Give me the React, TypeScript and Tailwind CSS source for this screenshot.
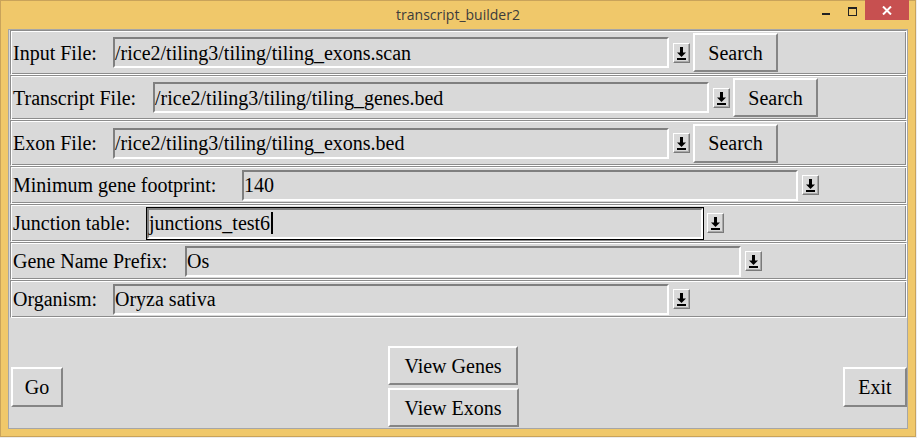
import React from "react";

function ArrowBtn() {
  return (
    <div className="ml-[3px] w-[17px] h-[20px] shrink-0 bg-[#d9d9d9] border-t border-l border-t-white border-l-white border-b border-r border-b-[#7a7a7a] border-r-[#7a7a7a] shadow-[inset_-1px_-1px_0_#a8a8a8]">
      <svg width="15" height="18" viewBox="0 0 15 18" className="block">
        <rect x="6" y="3" width="3" height="6" fill="#000" />
        <polygon points="3,8.5 12,8.5 7.5,13" fill="#000" />
        <rect x="3" y="14" width="9" height="2" fill="#000" />
      </svg>
    </div>
  );
}

function RaisedButton({ label, w, h }: { label: string; w: string; h?: string }) {
  return (
    <div
      className={
        "shrink-0 flex items-center justify-center bg-[#d9d9d9] text-[20px] text-black border-t-2 border-l-2 border-t-white border-l-white border-b-2 border-r-2 border-b-[#858585] border-r-[#858585] " +
        w +
        " " +
        (h ?? "h-[39px]")
      }
    >
      <span className="leading-none">{label}</span>
    </div>
  );
}

type Row = {
  label: string;
  lw: string;
  value: string;
  search?: boolean;
  focus?: boolean;
  h: string;
};

const rows: Row[] = [
  { label: "Input File:", lw: "w-[100px]", value: "/rice2/tiling3/tiling/tiling_exons.scan", search: true, h: "h-[45px]" },
  { label: "Transcript File:", lw: "w-[140px]", value: "/rice2/tiling3/tiling/tiling_genes.bed", search: true, h: "h-[45px]" },
  { label: "Exon File:", lw: "w-[100px]", value: "/rice2/tiling3/tiling/tiling_exons.bed", search: true, h: "h-[46px]" },
  { label: "Minimum gene footprint:", lw: "w-[229px]", value: "140", h: "h-[38px]" },
  { label: "Junction table:", lw: "w-[134px]", value: "junctions_test6", focus: true, h: "h-[38px]" },
  { label: "Gene Name Prefix:", lw: "w-[172px]", value: "Os", h: "h-[38px]" },
  { label: "Organism:", lw: "w-[100px]", value: "Oryza sativa", h: "h-[38px]" },
];

function FieldRow({ r }: { r: Row }) {
  return (
    <div
      className={
        "flex items-center ml-[1px] pl-[1px] border border-t-[#8c8c8c] border-l-[#8c8c8c] border-b-white border-r-white shadow-[inset_1px_1px_0_#ffffff,inset_-1px_-1px_0_#8c8c8c] " +
        r.h
      }
    >
      <div className={"shrink-0 pl-[1px] text-[20px] leading-none text-black whitespace-nowrap " + r.lw}>{r.label}</div>
      <div
        className={
          "w-[558px] h-[33px] shrink-0 border " + (r.focus ? "border-black" : "border-[#d9d9d9]")
        }
      >
        <div className="w-full h-full flex items-center border-t-2 border-l-2 border-t-[#7f7f7f] border-l-[#7f7f7f] border-b-2 border-r-2 border-b-white border-r-white bg-[#d9d9d9]">
          <span className="text-[20px] leading-none text-black whitespace-nowrap">{r.value}</span>
          {r.focus && <span className="inline-block w-[2px] h-[22px] bg-black ml-[1px]" />}
        </div>
      </div>
      <ArrowBtn />
      {r.search && (
        <div className="ml-[3px]">
          <RaisedButton label="Search" w="w-[85px]" />
        </div>
      )}
    </div>
  );
}

export default function App() {
  return (
    <div className="w-[917px] h-[438px] bg-[#ececec] relative overflow-hidden font-['Liberation_Serif',serif]">
      <div className="w-[916px] h-[437px] bg-[#f0c86a] border border-[#c9a35a] flex flex-col">
        <div className="h-[28px] shrink-0 relative flex items-center justify-center">
          <span className="font-['Open_Sans',sans-serif] text-[14px] text-[#3c3c3c] leading-none pb-[1px]">
            transcript_builder2
          </span>
          <div className="absolute left-[812px] top-0 w-[26px] h-[20px] flex items-center justify-center">
            <div className="w-[8px] h-[2px] bg-[#222] mt-[6px]" />
          </div>
          <div className="absolute left-[838px] top-0 w-[26px] h-[20px] flex items-center justify-center">
            <div className="w-[9px] h-[9px] border border-[#222] border-t-2" />
          </div>
          <div className="absolute right-[6px] top-[-1px] w-[44px] h-[20px] bg-[#c75050] flex items-center justify-center">
            <svg width="10" height="9" viewBox="0 0 10 9">
              <path d="M1 0.5 L9 8.5 M9 0.5 L1 8.5" stroke="#ffffff" strokeWidth="2" />
            </svg>
          </div>
        </div>
        <div className="mx-[7px] h-[400px] bg-[#d9d9d9] border border-[#a6a6a6] flex flex-col">
          {rows.map((r) => (
            <FieldRow key={r.label} r={r} />
          ))}
          <div className="flex-1 flex items-end">
            <div className="w-full flex items-center pb-[1px]">
              <div className="ml-[2px]">
                <RaisedButton label="Go" w="w-[52px]" h="h-[40px]" />
              </div>
              <div className="flex-1 flex flex-col items-center gap-[3px]">
                <RaisedButton label="View Genes" w="w-[130px]" />
                <RaisedButton label="View Exons" w="w-[131px]" />
              </div>
              <div>
                <RaisedButton label="Exit" w="w-[64px]" h="h-[40px]" />
              </div>
            </div>
          </div>
        </div>
      </div>
    </div>
  );
}
